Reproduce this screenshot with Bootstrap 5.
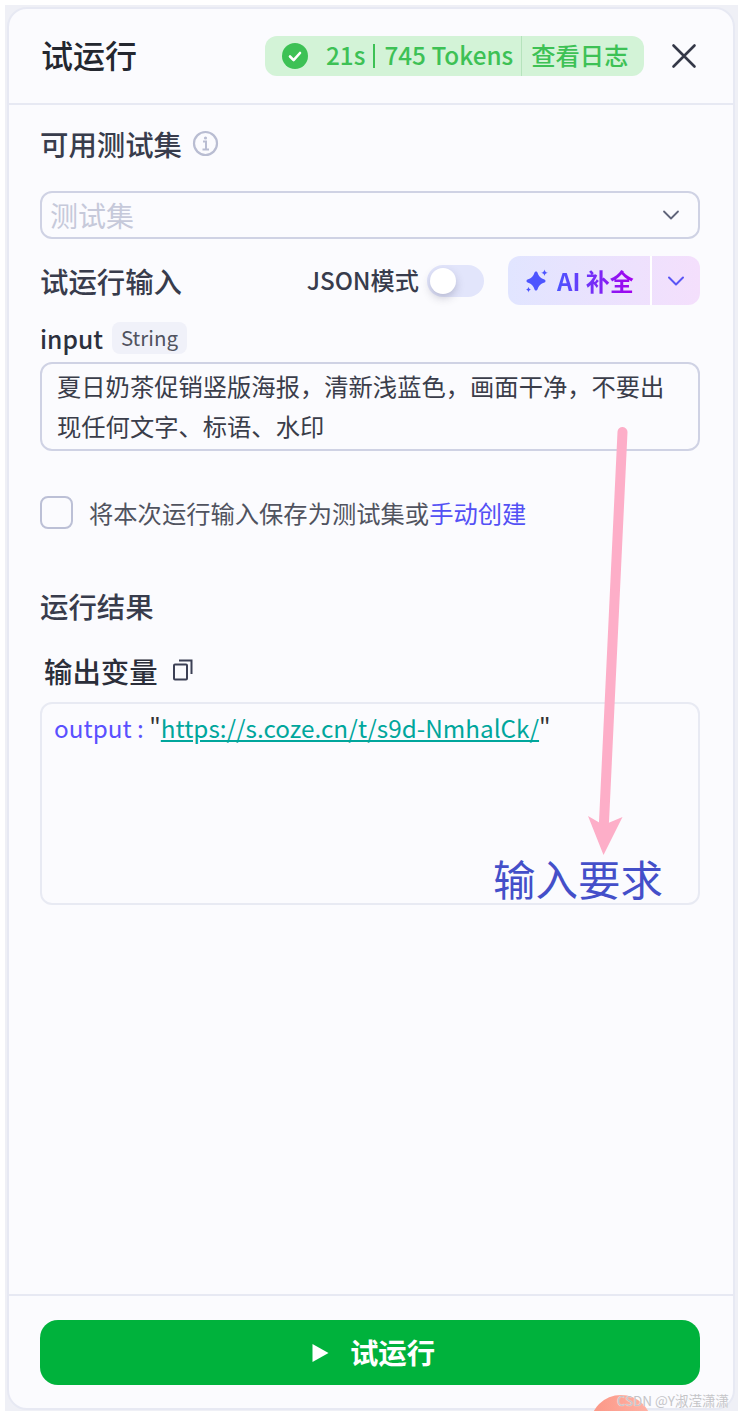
<!DOCTYPE html>
<html lang="zh-CN">
<head>
<meta charset="utf-8">
<title>试运行</title>
<link href="https://cdn.jsdelivr.net/npm/bootstrap@5.3.0/dist/css/bootstrap.min.css" rel="stylesheet">
<style>
html,body{height:1414px;overflow:hidden;background:#fff;}
body{font-family:"Noto Sans CJK SC","Noto Sans",sans-serif;color:#343848;position:relative;}
.page-wrap{height:1406px;margin:5px 0 0 5px;padding:2px 3px 1px 2px;background:#eff0f6;position:relative;overflow:hidden;}
.panel-box{height:100%;background:#fbfbfe;border:2px solid #e7e9f3;border-radius:20px;overflow:hidden;}
.panel-head{height:96px;padding:0 36px 0 32px;border-bottom:2px solid #e7e9f3;}
.panel-title{font-size:32px;font-weight:500;color:#24272f;line-height:1;margin:0 0 4px;}
.run-stat{height:40px;width:379px;margin-top:-1px;background:#d3f3d7;border-radius:12px;color:#3dc155;font-size:24.3px;font-weight:500;padding-left:17px;}
.run-stat svg{flex:none;}
.stat-num{margin-bottom:0;white-space:nowrap;}
.stat-time{margin-left:18px;}
.stat-sep{width:2px;height:24px;background:#3dc155;margin:0 9px 0 8px;flex:none;}
.stat-log{border-left:1px solid #b5e3bc;height:40px;line-height:38px;padding-left:9px;margin-left:8px;white-space:nowrap;}
.panel-main{padding:0 33px 0 31px;}
.sec-label{font-size:28.4px;font-weight:500;line-height:40px;color:#383c4c;margin:0;}
.test-select{height:48px;margin-top:27px;border:2px solid #cfd2e4;border-radius:12px;padding:0 18px 0 8px;font-size:28px;color:#c6c9da;}
.mode-label{font-size:24.2px;font-weight:500;color:#383c4c;line-height:36px;margin-bottom:2px;}
.toggle-track{width:57px;height:32px;border-radius:16px;background:#e2e5fb;margin:0 24px 0 8px;padding-left:3px;}
.toggle-knob{width:26px;height:26px;border-radius:50%;background:#fff;box-shadow:0 4px 8px rgba(60,60,90,.25);}
.ai-group{width:192px;height:49px;border-radius:12px;overflow:hidden;background:linear-gradient(90deg,#e1e5ff,#f4dffc);}
.ai-main{width:144px;border-right:2px solid #fff;padding-left:17px;font-size:24px;font-weight:700;}
.ai-text{background:linear-gradient(90deg,#4d55ff,#a400ee);-webkit-background-clip:text;background-clip:text;color:transparent;margin-left:8px;white-space:nowrap;}
.ai-arrow{flex:1;}
.var-name{font-size:24.6px;font-weight:500;color:#2c303d;line-height:32px;}
.var-tag{height:32px;background:#f0f1f9;border-radius:8px;padding:0 9px;font-size:20.5px;line-height:31px;color:#50535f;margin-left:9px;}
.input-box{height:89px;margin-top:8px;border:2px solid #cfd2e4;border-radius:12px;padding:2px 15px 0;font-size:24.3px;line-height:40px;color:#3a3d4a;}
.check-square{width:33px;height:33px;border:2px solid #bcc0d6;border-radius:8px;flex:none;}
.check-row{margin-top:45px;font-size:24.3px;line-height:32px;color:#50535f;}
.check-row .check-text{margin-left:16px;white-space:nowrap;}
.create-link{color:#5350f5;}
.var-head{margin-top:25px;font-size:28.4px;font-weight:500;line-height:40px;color:#2b2e3a;padding-left:4px;}
.output-box{height:203px;margin-top:11px;border:2px solid #e8eaf3;border-radius:12px;padding:4px 12px;font-size:24.3px;line-height:40px;color:#333;white-space:nowrap;}
.out-key{color:#5a50ff;}
.out-link{color:#00a69c;text-decoration:underline;}
.panel-foot{height:114px;border-top:2px solid #e7e9f3;padding:24px 33px 0 31px;}
.run-btn{height:65px;background:#00b23c;border-radius:18px;color:#fff;font-size:28.4px;font-weight:700;padding-left:19px;}
.run-btn:hover{background:#00b23c;color:#fff;}
.overlay-arrow{position:absolute;left:0;top:0;pointer-events:none;}
.note-text{position:absolute;left:493px;top:848px;font-size:42.5px;line-height:60px;color:#444fc9;white-space:nowrap;}
.corner-blob{position:absolute;left:585px;top:1390px;width:62px;height:62px;border-radius:50%;background:linear-gradient(90deg,#fb9685,#ffb3a6);}
.mark-text{position:absolute;right:9px;top:1391px;font-size:13.5px;line-height:18px;color:#c4c4c8;white-space:nowrap;text-shadow:0 0 1px #fff;}
.close-x{margin-left:27px;}
.info-row{margin-top:19px;}
.info-mark{margin-left:10px;margin-top:-2px;}
.input-head{margin-top:17px;}
.var-row{margin-top:17px;}
.result-label{margin-top:57px;}
.copy-mark{margin-left:15px;margin-top:-3px;}
.play-mark{margin-right:21px;}
</style>
</head>
<body>
<div class="page-wrap">
  <div class="panel-box d-flex flex-column">
    <div class="panel-head d-flex align-items-center justify-content-between">
      <h1 class="panel-title">试运行</h1>
      <div class="d-flex align-items-center">
        <div class="run-stat d-flex align-items-center">
          <svg width="26" height="26" viewBox="0 0 26 26"><circle cx="13" cy="13" r="13" fill="#3dc155"/><path d="M8 13.500l3.600 3.600L18 10" fill="none" stroke="#fff" stroke-width="2.600" stroke-linecap="round" stroke-linejoin="round"/></svg>
          <span class="stat-num stat-time">21s</span><span class="stat-sep"></span><span class="stat-num">745 Tokens</span>
          <span class="stat-log">查看日志</span>
        </div>
        <svg width="26" height="26" viewBox="0 0 26 26" class="close-x"><path d="M2.500 2.500l21 21M23.500 2.500l-21 21" fill="none" stroke="#343848" stroke-width="2.600" stroke-linecap="round"/></svg>
      </div>
    </div>
    <div class="panel-main flex-grow-1">
      <div class="d-flex align-items-center info-row">
        <p class="sec-label">可用测试集</p>
        <svg width="27" height="27" viewBox="0 0 27 27" class="info-mark"><circle cx="13.500" cy="13.500" r="11.500" fill="none" stroke="#b9bdd2" stroke-width="2.200"/><circle cx="13.500" cy="8" r="1.600" fill="#b9bdd2"/><path d="M11 11.500h3v8M10.500 19.500h6.500" fill="none" stroke="#b9bdd2" stroke-width="2"/></svg>
      </div>
      <div class="test-select d-flex align-items-center justify-content-between">
        <span>测试集</span>
        <svg width="18" height="12" viewBox="0 0 18 12"><path d="M2 2.500l7 7 7-7" fill="none" stroke="#60647a" stroke-width="1.800" stroke-linecap="round" stroke-linejoin="round"/></svg>
      </div>
      <div class="d-flex align-items-center justify-content-between input-head">
        <p class="sec-label">试运行输入</p>
        <div class="d-flex align-items-center">
          <span class="mode-label">JSON模式</span>
          <span class="toggle-track d-flex align-items-center"><span class="toggle-knob"></span></span>
          <div class="ai-group d-flex">
            <div class="ai-main d-flex align-items-center">
              <svg width="24" height="24" viewBox="0 0 24 24" class="flex-shrink-0"><path d="M11 4Q12.800 10.200 19 12Q12.800 13.800 11 20Q9.200 13.800 3 12Q9.200 10.200 11 4z" fill="#4d55ff" stroke="#4d55ff" stroke-width="3" stroke-linejoin="round"/><path d="M19.500 0.500c.4 2 1.300 2.900 3.300 3.300-2 .4-2.900 1.300-3.300 3.300-.4-2-1.300-2.900-3.300-3.300 2-.4 2.900-1.300 3.300-3.300zM3.500 17.800c.3 1.700 1.100 2.500 2.800 2.800-1.700.3-2.500 1.100-2.800 2.800-.3-1.700-1.100-2.500-2.800-2.800 1.700-.3 2.500-1.100 2.800-2.800z" fill="#4d55ff"/></svg>
              <span class="ai-text">AI 补全</span>
            </div>
            <div class="ai-arrow d-flex align-items-center justify-content-center">
              <svg width="18" height="12" viewBox="0 0 18 12"><path d="M2 2.500l7 7 7-7" fill="none" stroke="#5a55f5" stroke-width="2" stroke-linecap="round" stroke-linejoin="round"/></svg>
            </div>
          </div>
        </div>
      </div>
      <div class="d-flex align-items-center var-row">
        <span class="var-name">input</span><span class="var-tag">String</span>
      </div>
      <div class="input-box">夏日奶茶促销竖版海报，清新浅蓝色，画面干净，不要出现任何文字、标语、水印</div>
      <div class="check-row d-flex align-items-center">
        <span class="check-square"></span>
        <span class="check-text">将本次运行输入保存为测试集或<span class="create-link">手动创建</span></span>
      </div>
      <p class="sec-label result-label">运行结果</p>
      <div class="var-head d-flex align-items-center">
        <span>输出变量</span>
        <svg width="20" height="22" viewBox="0 0 20 22" class="copy-mark"><rect x="1" y="5.500" width="13" height="15" rx="1" fill="none" stroke="#3c4055" stroke-width="2"/><path d="M6 1.500h12.500V15" fill="none" stroke="#3c4055" stroke-width="2"/></svg>
      </div>
      <div class="output-box"><span class="out-key">output : </span>"<span class="out-link">https://s.coze.cn/t/s9d-NmhalCk/</span>"</div>
    </div>
    <div class="panel-foot">
      <button type="button" class="btn run-btn w-100 d-flex align-items-center justify-content-center border-0">
        <svg width="17" height="20" viewBox="0 0 17 20" class="play-mark"><path d="M0.500 1l16 9-16 9z" fill="#fff"/></svg>
        试运行
      </button>
    </div>
  </div>
  <div class="corner-blob"></div>
</div>
<svg class="overlay-arrow" width="738" height="1414" viewBox="0 0 738 1414">
  <path d="M622.500 432L604 822" stroke="#fdaec8" stroke-width="10" stroke-linecap="round" fill="none"/>
  <path d="M588 816l15.500 9 19-8-19 38z" fill="#fdaec8"/>
</svg>
<div class="note-text">输入要求</div>
<div class="mark-text">CSDN @Y淑滢潇潇</div>
</body>
</html>
